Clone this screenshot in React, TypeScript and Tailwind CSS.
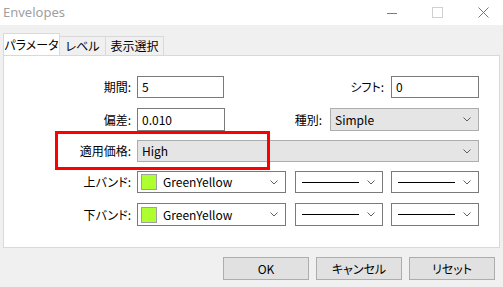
import type { ReactNode } from 'react';

function Chevron() {
  return (
    <svg width="8" height="5" viewBox="0 0 8 5" className="shrink-0">
      <path d="M0.5 0.5 L4 4 L7.5 0.5" fill="none" stroke="#606060" strokeWidth="1" />
    </svg>
  );
}

function Label({ children }: { children: ReactNode }) {
  return <div className="w-[133px] shrink-0 pr-[6px] text-right">{children}</div>;
}

function TextBox({ value, w }: { value: string; w: string }) {
  return (
    <div className={`${w} h-full shrink-0 border border-[#7a7a7a] bg-white px-[4px] flex items-center`}>
      {value}
    </div>
  );
}

function DropList({ value, w }: { value: string; w: string }) {
  return (
    <div className={`${w} h-full shrink-0 border border-[#adadad] bg-[#e5e5e5] pl-[4px] pr-[7px] flex items-center justify-between`}>
      <span>{value}</span>
      <Chevron />
    </div>
  );
}

function ColorBox() {
  return (
    <div className="w-[149px] h-full shrink-0 border border-[#7a7a7a] bg-white pl-[3px] pr-[7px] flex items-center">
      <span className="w-[16px] h-[16px] border border-[#a0a0a0] bg-[#adff2f] shrink-0" />
      <span className="ml-[6px] flex-1">GreenYellow</span>
      <Chevron />
    </div>
  );
}

function LineBox({ ml }: { ml: string }) {
  return (
    <div className={`${ml} w-[88px] h-full shrink-0 border border-[#7a7a7a] bg-white pl-[6px] pr-[7px] flex items-center justify-between`}>
      <span className="w-[57px] h-px bg-black" />
      <Chevron />
    </div>
  );
}

function Button({ children }: { children: ReactNode }) {
  return (
    <div className="w-[86px] h-[23px] border border-[#adadad] bg-[#e1e1e1] flex items-center justify-center">
      {children}
    </div>
  );
}

export default function App() {
  return (
    <div className="w-[503px] h-[287px] bg-[#f0f0f0] flex flex-col text-[12px] text-black leading-none overflow-hidden font-['Noto_Sans_CJK_JP',sans-serif] [font-feature-settings:'palt']">
      <div className="h-[25px] bg-white flex items-center shrink-0">
        <span className="pl-[3px] text-[13px] text-[#a0a0a0] font-['Noto_Sans',sans-serif]">Envelopes</span>
        <div className="ml-auto flex items-center">
          <svg width="10" height="10" viewBox="0 0 10 10" className="mr-[35px]">
            <path d="M0 5.5 H10" stroke="#7a7a7a" strokeWidth="1" />
          </svg>
          <svg width="11" height="11" viewBox="0 0 11 11" className="mr-[35px]">
            <rect x="0.5" y="0.5" width="10" height="10" fill="none" stroke="#d0d0d0" />
          </svg>
          <svg width="11" height="11" viewBox="0 0 11 11" className="mr-[14px]">
            <path d="M0.5 0.5 L10.5 10.5 M10.5 0.5 L0.5 10.5" stroke="#7a7a7a" strokeWidth="1" />
          </svg>
        </div>
      </div>

      <div className="pt-[8px] pl-[3px] flex items-end h-[30px] shrink-0 whitespace-nowrap">
        <div className="h-[22px] w-[57px] bg-white border border-b-0 border-[#d9d9d9] flex items-center justify-center">パラメータ</div>
        <div className="h-[19px] w-[46px] border border-l-0 border-b-0 border-[#d9d9d9] flex items-center justify-center">レベル</div>
        <div className="h-[19px] w-[58px] border border-l-0 border-b-0 border-[#d9d9d9] flex items-center justify-center">表示選択</div>
      </div>

      <div className="relative mx-[3px] h-[193px] bg-white border border-[#d9d9d9] shrink-0 pt-[20px] flex flex-col whitespace-nowrap">
        <div className="h-[22px] flex items-center">
          <Label>期間:</Label>
          <TextBox value="5" w="w-[87px]" />
          <div className="w-[167px] shrink-0 pr-[7px] text-right">シフト:</div>
          <TextBox value="0" w="w-[88px]" />
        </div>
        <div className="h-[23px] mt-[10px] flex items-center">
          <Label>偏差:</Label>
          <TextBox value="0.010" w="w-[88px]" />
          <div className="w-[105px] shrink-0 pr-[8px] text-right">種別:</div>
          <DropList value="Simple" w="w-[149px]" />
        </div>
        <div className="h-[22px] mt-[9px] flex items-center">
          <Label>適用価格:</Label>
          <DropList value="High" w="w-[342px]" />
        </div>
        <div className="h-[22px] mt-[9px] flex items-center">
          <Label>上バンド:</Label>
          <ColorBox />
          <LineBox ml="ml-[9px]" />
          <LineBox ml="ml-[8px]" />
        </div>
        <div className="h-[23px] mt-[10px] flex items-center">
          <Label>下バンド:</Label>
          <ColorBox />
          <LineBox ml="ml-[9px]" />
          <LineBox ml="ml-[8px]" />
        </div>

        <div className="absolute left-[51px] top-[75px] w-[215px] h-[39px] border-[3px] border-[#ff0000]" />
      </div>

      <div className="mt-[9px] pl-[223px] flex gap-[7px]">
        <Button>OK</Button>
        <Button>キャンセル</Button>
        <Button>リセット</Button>
      </div>
    </div>
  );
}
